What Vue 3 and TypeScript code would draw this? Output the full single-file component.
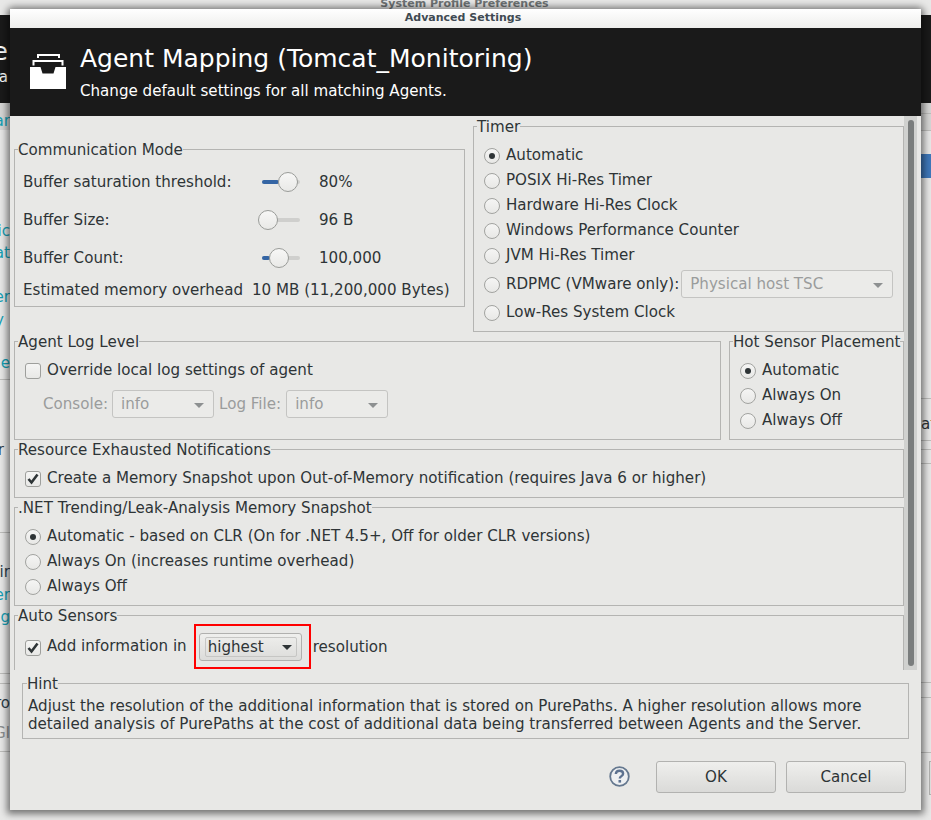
<script setup lang="ts">
interface SliderRow { label: string; fill: number; knob: number; value: string }
interface Scrap { text: string; y: number; tone: string; end?: number }

const sliders: SliderRow[] = [
  { label: 'Buffer saturation threshold:', fill: 17, knob: 16, value: '80%' },
  { label: 'Buffer Size:', fill: 0, knob: -4, value: '96 B' },
  { label: 'Buffer Count:', fill: 8, knob: 7, value: '100,000' },
]
const timers = ['POSIX Hi-Res Timer', 'Hardware Hi-Res Clock', 'Windows Performance Counter', 'JVM Hi-Res Timer']

// bits of the parent window that stick out left of the dialog
const scraps: Scrap[] = [
  { text: 'Dear', y: 121, tone: 'teal' },
  { text: 'Logic', y: 231, tone: 'teal' },
  { text: 'Stat', y: 253, tone: 'teal' },
  { text: 'Other', y: 297, tone: 'teal' },
  { text: 'Key', y: 320, tone: 'teal', end: 4 },
  { text: 'Name', y: 363, tone: 'teal' },
  { text: 'For', y: 450, tone: 'dark', end: 4 },
  { text: 'Air', y: 572, tone: 'dark' },
  { text: 'Other', y: 595, tone: 'teal' },
  { text: 'Config', y: 617, tone: 'teal' },
  { text: 'Pro', y: 703, tone: 'dark' },
  { text: 'Gl', y: 733, tone: 'grey' },
]
const leftLines = [379, 532, 673, 683, 751]
const rightLines = [113, 130, 398, 440, 449, 463, 682, 697, 752]
</script>

<template>
  <div class="screen">
    <div class="behind">
      <div class="behind-title">System Profile Preferences</div>
      <div class="behind-band"></div>
      <div class="behind-head">
        <span class="scrap big">e</span>
        <span class="scrap sub">a</span>
      </div>
      <div class="behind-select"></div>
      <span
        v-for="s in scraps"
        :key="s.y"
        class="scrap"
        :class="s.tone"
        :style="{ top: s.y - 9 + 'px', right: 931 - (s.end ?? 10) + 'px' }"
      >{{ s.text }}</span>
      <i v-for="y in leftLines" :key="y" class="line left" :style="{ top: y + 'px' }"></i>
      <i v-for="y in rightLines" :key="y" class="line right" :style="{ top: y + 'px' }"></i>
      <span class="scrap-right">at</span>
      <div class="behind-btn"></div>
    </div>

    <div class="dialog">
      <div class="titlebar">Advanced Settings</div>

      <header class="banner">
        <svg class="banner-icon" width="36" height="36" viewBox="0 0 36 36">
          <path fill="#fff" d="M7 1h23v4h-2V3H9v2H7zM2.500 7h31v5.500h-2V9h-27v3.500h-2zM0 14h10.500l2 6.500h11l2-6.500H36v22H0z" />
        </svg>
        <div>
          <h1>Agent Mapping (Tomcat_Monitoring)</h1>
          <p>Change default settings for all matching Agents.</p>
        </div>
      </header>

      <div class="scroller">
        <div class="pane">
          <div class="top-row">
            <fieldset class="box comm">
              <legend>Communication Mode</legend>
              <div v-for="s in sliders" :key="s.label" class="slider-row">
                <span>{{ s.label }}</span>
                <span class="slider">
                  <span class="slider-fill" :style="{ width: s.fill + 'px' }"></span>
                  <span class="slider-knob" :style="{ left: s.knob + 'px' }"></span>
                </span>
                <span>{{ s.value }}</span>
              </div>
              <div class="overhead">
                <span>Estimated memory overhead</span>
                <span>10 MB (11,200,000 Bytes)</span>
              </div>
            </fieldset>

            <fieldset class="box timer">
              <legend>Timer</legend>
              <label class="opt"><i class="radio on"></i>Automatic</label>
              <label v-for="t in timers" :key="t" class="opt"><i class="radio"></i>{{ t }}</label>
              <div class="opt rdpmc">
                <i class="radio"></i>RDPMC (VMware only):
                <span class="combo disabled wide">Physical host TSC<b class="arrow"></b></span>
              </div>
              <label class="opt"><i class="radio"></i>Low-Res System Clock</label>
            </fieldset>
          </div>

          <div class="log-row">
            <fieldset class="box log">
              <legend>Agent Log Level</legend>
              <label class="opt"><i class="check"></i>Override local log settings of agent</label>
              <div class="log-combos">
                <span class="console">Console:</span>
                <span class="combo disabled small">info<b class="arrow"></b></span>
                <span>Log File:</span>
                <span class="combo disabled small">info<b class="arrow"></b></span>
              </div>
            </fieldset>
            <fieldset class="box hot">
              <legend>Hot Sensor Placement</legend>
              <label class="opt"><i class="radio on"></i>Automatic</label>
              <label class="opt"><i class="radio"></i>Always On</label>
              <label class="opt"><i class="radio"></i>Always Off</label>
            </fieldset>
          </div>

          <fieldset class="box wide-box res">
            <legend>Resource Exhausted Notifications</legend>
            <label class="opt">
              <i class="check">
                <svg width="14" height="14" viewBox="0 0 14 14"><path d="M2.500 7l3 3.500 6-8" fill="none" stroke="#2e3436" stroke-width="2.600" /></svg>
              </i>Create a Memory Snapshot upon Out-of-Memory notification (requires Java 6 or higher)
            </label>
          </fieldset>

          <fieldset class="box wide-box net">
            <legend>.NET Trending/Leak-Analysis Memory Snapshot</legend>
            <label class="opt"><i class="radio on"></i>Automatic - based on CLR (On for .NET 4.5+, Off for older CLR versions)</label>
            <label class="opt"><i class="radio"></i>Always On (increases runtime overhead)</label>
            <label class="opt"><i class="radio"></i>Always Off</label>
          </fieldset>

          <fieldset class="box wide-box auto">
            <legend>Auto Sensors</legend>
            <div class="auto-row">
              <i class="check">
                <svg width="14" height="14" viewBox="0 0 14 14"><path d="M2.500 7l3 3.500 6-8" fill="none" stroke="#2e3436" stroke-width="2.600" /></svg>
              </i>
              <span class="auto-label">Add information in</span>
              <span class="highlight">
                <span class="combo active">highest<b class="arrow dark"></b></span>
              </span>
              <span class="auto-tail">resolution</span>
            </div>
          </fieldset>
        </div>
        <div class="track"><div class="thumb"></div></div>
      </div>

      <fieldset class="box hint">
        <legend>Hint</legend>
        Adjust the resolution of the additional information that is stored on PurePaths. A higher resolution allows more<br />
        detailed analysis of PurePaths at the cost of additional data being transferred between Agents and the Server.
      </fieldset>

      <footer class="actions">
        <svg class="help" width="21" height="21" viewBox="0 0 21 21">
          <circle cx="10.500" cy="10.500" r="9.300" fill="#eef0f2" stroke="#65788f" stroke-width="1.800" />
          <path d="M6.800 8c.2-2.100 1.700-3.200 3.700-3.200 2.100 0 3.600 1.200 3.600 2.900 0 2.400-3.300 2.400-3.300 4.800" fill="none" stroke="#5d7290" stroke-width="2.400" />
          <rect x="9.500" y="14" width="2.600" height="2.600" fill="#5d7290" />
        </svg>
        <button type="button" class="btn">OK</button>
        <button type="button" class="btn">Cancel</button>
      </footer>
    </div>
  </div>
</template>

<style>
html, body { margin: 0; background: #e8e8e7; }
</style>

<style scoped>
.screen {
  position: relative; width: 931px; height: 820px; overflow: hidden; background: #e8e8e7;
  font-family: "DejaVu Sans", sans-serif; font-size: 15.1px; color: #2e3436;
}

/* parent window behind the dialog */
.behind { position: absolute; inset: 0; }
.behind-title { text-align: center; font-size: 11px; font-weight: 700; color: #6f7475; line-height: 10px; margin-top: -1px; padding-right: 2px; }
.behind-band { position: absolute; left: 0; right: 0; top: 103px; height: 27px; background: #d6d6d5; }
.behind-head { position: absolute; left: 0; right: 0; top: 15px; height: 88px; background: #1a1a1a; }
.behind-select { position: absolute; left: 921px; top: 154px; width: 10px; height: 24px; background: #3f78ba; }
.behind-btn { position: absolute; left: 929px; top: 761px; width: 4px; height: 32px; border: 1px solid #b2b2b0; background: #e0e0de; }
.scrap { position: absolute; line-height: 18px; white-space: nowrap; }
.scrap.big { top: 22px; font-size: 25px; line-height: 30px; color: #fff; right: 923px; }
.scrap.sub { top: 53px; color: #fff; right: 923px; }
.scrap.teal { color: #14a0b5; }
.scrap.dark { color: #2e3f4c; }
.scrap.grey { color: #8c8f90; }
.scrap-right { position: absolute; left: 921px; top: 415px; line-height: 18px; }
.line { position: absolute; height: 1px; background: #bdbdbb; }
.line.left { left: 0; width: 10px; }
.line.right { left: 921px; width: 10px; }

.dialog {
  position: absolute; left: 10px; top: 9px; width: 911px; height: 801px; background: #e8e8e6;
  display: flex; flex-direction: column; border-radius: 3px 3px 0 0;
  box-shadow: 0 1px 7px 3px rgba(0, 0, 0, .5);
}
.titlebar {
  height: 19px; flex: none; text-align: center; font-size: 11px; font-weight: 700; line-height: 18px; color: #3f4a52;
  background: linear-gradient(#fff, #eeeeec); padding-right: 5px;
}
.banner { height: 88px; flex: none; background: #1a1a1a; color: #fff; display: flex; align-items: center; gap: 14px; padding-left: 20px; box-sizing: border-box; }
.banner-icon { flex: none; margin-top: -2px; }
.banner h1 { margin: -1px 0 8px; font-size: 25px; font-weight: 400; line-height: 30px; }
.banner p { margin: 0; font-size: 15.1px; line-height: 18px; }

.scroller { height: 554px; flex: none; display: flex; overflow: hidden; }
.pane { width: 894px; flex: none; padding-left: 4px; box-sizing: border-box; }
.track { width: 13px; background: #d0d1cf; padding: 4px 3px 4px 4px; box-sizing: border-box; flex: none; }
.thumb { height: 100%; background: #7a7d7d; border-radius: 3px; }

.box { margin: 0; padding: 0 0 0 10px; border: 1px solid #b4b4b2; min-width: 0; box-sizing: border-box; }
.box legend { padding: 0; margin-left: -7px; line-height: 19px; height: 17px; white-space: nowrap; }

.top-row { display: grid; grid-template-columns: 451px 431px; column-gap: 8px; align-items: start; padding-top: 2px; }
.comm { margin-top: 23px; height: 166px; padding: 5px 0 0 8px; }
.comm legend { margin-left: -5px; }
.slider-row { height: 38px; display: grid; grid-template-columns: 239px 57px 1fr; align-items: center; }
.slider { position: relative; display: block; height: 4px; width: 38px; background: #cfcfcd; border-radius: 2px; }
.slider-fill { position: absolute; left: 0; top: 0; height: 4px; background: #3465a4; border-radius: 2px; }
.slider-knob {
  position: absolute; top: -8px; width: 20px; height: 20px; border-radius: 50%; box-sizing: border-box;
  border: 1px solid #9a9c99; background: linear-gradient(#f7f7f6, #e9e9e7);
}
.overhead { display: flex; gap: 9px; line-height: 18px; margin-top: 4px; }

.timer { height: 214px; padding-top: 7px; }
.opt { display: flex; align-items: center; height: 25px; white-space: nowrap; }
.radio {
  width: 16px; height: 16px; border-radius: 50%; border: 1px solid #a2a3a0; box-sizing: border-box; margin-right: 6px; flex: none;
  background: linear-gradient(#f5f5f4, #e8e8e6); position: relative; top: 1px;
}
.radio.on::after { content: ''; position: absolute; left: 4px; top: 4px; width: 6px; height: 6px; border-radius: 50%; background: #2e3436; }
.rdpmc { height: 30px; padding-top: 2px; }
.rdpmc .combo { margin-left: 2px; }

.combo {
  display: inline-flex; align-items: center; position: relative; box-sizing: border-box; height: 28px; padding-left: 8px;
  border: 1px solid #c4c4c2; border-radius: 3px;
}
.combo.disabled { color: #9a9c9c; background: #ebebe9; }
.combo.wide { width: 212px; }
.combo.small { width: 102px; }
.arrow { position: absolute; right: 9px; top: 12px; border: 5px solid transparent; border-top-color: #8d9091; border-bottom: 0; }
.arrow.dark { border-top-color: #2e3436; right: 9px; top: 11px; }

.log-row { display: grid; grid-template-columns: 707px 175px; column-gap: 8px; margin-top: 1px; }
.log, .hot { height: 107px; padding-top: 7px; }
.check {
  width: 16px; height: 16px; border: 1px solid #9e9f9c; border-radius: 3px; box-sizing: border-box; margin-right: 6px; flex: none;
  background: linear-gradient(#f5f5f4, #e8e8e6); position: relative; top: 1px; display: block;
}
.check svg { position: absolute; left: 0; top: 0; }
.log-combos { display: flex; align-items: center; gap: 5px; padding-left: 18px; margin-top: 8px; color: #9a9c9c; }
.console { margin-right: -1px; }

.wide-box { width: 890px; margin-top: 1px; padding-top: 7px; }
.res { height: 57px; }
.net { height: 107px; }
.auto { height: 80px; padding-top: 0; }
.auto-row { display: flex; align-items: center; height: 45px; }
.auto-label { margin-top: -1px; }
.auto-tail { margin-top: 1px; }
.highlight { display: inline-flex; align-items: center; width: 117px; height: 45px; box-sizing: border-box; border: 2px solid #f00; margin: 0 2px 0 7px; padding-left: 3px; }
.combo.active { width: 103px; height: 28px; padding-left: 8px; border-color: #b0b0ae; color: #2e3436; background: linear-gradient(#efefed, #dcdcda); }
.combo.active::after { content: ''; position: absolute; left: 5px; right: 4px; top: 3px; bottom: 3px; border: 1px solid #c6c6c4; border-radius: 2px; }

.hint { width: 887px; height: 64px; margin: 5px 0 0 12px; padding: 5px 0 0 5px; line-height: 18px; flex: none; white-space: nowrap; }
.hint legend { margin-left: -1px; }

.actions { display: flex; align-items: center; justify-content: flex-end; padding-right: 15px; margin-top: 22px; }
.help { margin: -2px 16px 0 0; }
.btn {
  width: 120px; height: 32px; margin-left: 10px; font: inherit; color: #2e3436; border: 1px solid #b2b2b0; border-radius: 3px;
  background: linear-gradient(#efefed, #dadad8); padding: 0;
}
</style>
